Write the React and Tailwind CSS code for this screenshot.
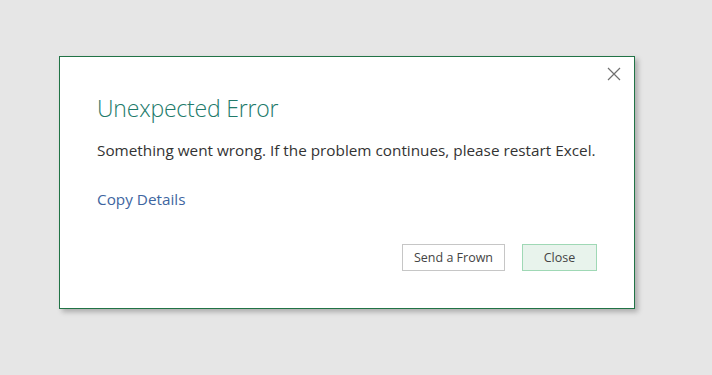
export default function App() {
  return (
    <div
      className="w-[712px] h-[375px] bg-[#e6e6e6] pt-[56px] pl-[59px]"
      style={{ fontFamily: '"Open Sans", "Noto Sans", sans-serif' }}
    >
      <div className="relative w-[576px] h-[253px] bg-white border border-[#217346] shadow-[3px_3px_5px_rgba(0,0,0,0.25)] pl-[37px] pt-[36px]">
        <button className="absolute top-[8px] right-[11px] w-[18px] h-[18px] flex items-center justify-center">
          <svg width="14" height="14" viewBox="0 0 14 14">
            <path d="M1 1L13 13M13 1L1 13" stroke="#707070" strokeWidth="1.2" />
          </svg>
        </button>
        <h1 className="text-[23px] leading-[30px] font-light text-[#217a6a] tracking-[-0.2px]">
          Unexpected Error
        </h1>
        <p className="mt-[17px] text-[15.3px] leading-[20px] text-[#333333]">
          Something went wrong. If the problem continues, please restart Excel.
        </p>
        <div className="mt-[29px] text-[15.3px] leading-[20px] text-[#3e65a0]">
          Copy Details
        </div>
        <div className="flex justify-end gap-[17px] mt-[35px] pr-[37px]">
          <button className="w-[103px] h-[27px] pt-[2px] border border-[#c6c6c6] bg-white text-[12.5px] text-[#444444]">
            Send a Frown
          </button>
          <button className="w-[75px] h-[27px] pt-[2px] border border-[#9fd8b5] bg-[#e8f3ec] text-[12.5px] text-[#444444]">
            Close
          </button>
        </div>
      </div>
    </div>
  );
}
